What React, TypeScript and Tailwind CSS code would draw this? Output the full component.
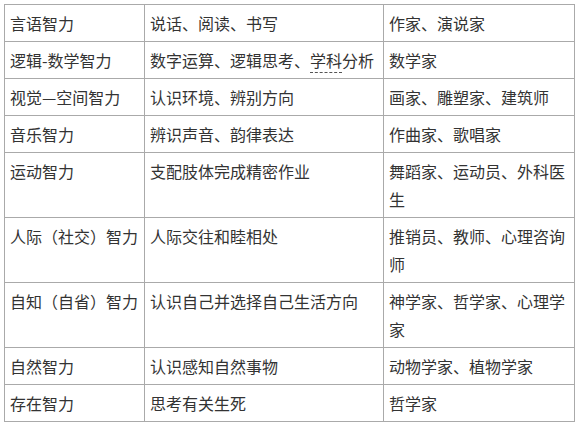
const rows: [React.ReactNode, React.ReactNode, React.ReactNode][] = [
  ['言语智力', '说话、阅读、书写', '作家、演说家'],
  [
    '逻辑-数学智力',
    <>
      数字运算、逻辑思考、
      <span className="border-b border-dashed border-[#555]">学科</span>
      分析
    </>,
    '数学家',
  ],
  ['视觉—空间智力', '认识环境、辨别方向', '画家、雕塑家、建筑师'],
  ['音乐智力', '辨识声音、韵律表达', '作曲家、歌唱家'],
  ['运动智力', '支配肢体完成精密作业', '舞蹈家、运动员、外科医生'],
  ['人际（社交）智力', '人际交往和睦相处', '推销员、教师、心理咨询师'],
  ['自知（自省）智力', '认识自己并选择自己生活方向', '神学家、哲学家、心理学家'],
  ['自然智力', '认识感知自然事物', '动物学家、植物学家'],
  ['存在智力', '思考有关生死', '哲学家'],
]

export default function App() {
  return (
    <div className="bg-white p-1 font-['Noto_Sans_CJK_SC','Microsoft_YaHei',sans-serif] text-[16px] leading-[28px] text-[#333]">
      <table className="w-[570px] table-fixed border-collapse">
        <colgroup>
          <col className="w-[140px]" />
          <col className="w-[239px]" />
          <col className="w-[191px]" />
        </colgroup>
        <tbody>
          {rows.map((r, i) => (
            <tr key={i}>
              {r.map((c, j) => (
                <td
                  key={j}
                  className="border border-[#aaa] px-[5px] py-[4px] align-top"
                >
                  {c}
                </td>
              ))}
            </tr>
          ))}
        </tbody>
      </table>
    </div>
  )
}
